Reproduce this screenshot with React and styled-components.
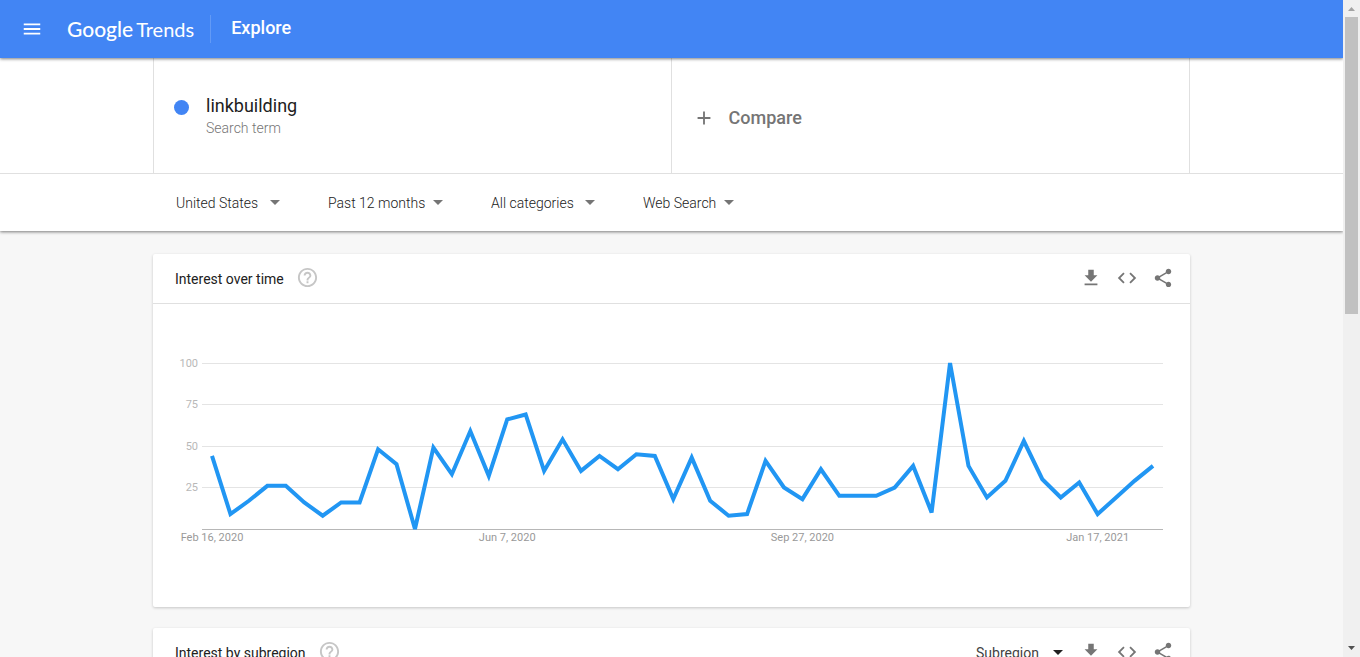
import React from "react";
import styled, { createGlobalStyle } from "styled-components";
import {
  MdAdd,
  MdCode,
  MdHelpOutline,
  MdMenu,
  MdShare,
} from "react-icons/md";

const values = [
  44, 9, 17, 26, 26, 16, 8, 16, 16, 48, 39, 0, 49, 33, 59, 32, 66, 69, 35, 54,
  35, 44, 36, 45, 44, 18, 43, 17, 8, 9, 41, 25, 18, 36, 20, 20, 20, 25, 38, 10,
  100, 38, 19, 29, 53, 30, 19, 28, 9, 19, 29, 38,
];

const dateLabels = [
  { week: 0, text: "Feb 16, 2020" },
  { week: 16, text: "Jun 7, 2020" },
  { week: 32, text: "Sep 27, 2020" },
  { week: 48, text: "Jan 17, 2021" },
];

const filters = [
  { label: "Location", value: "United States", wide: true },
  { label: "Time range", value: "Past 12 months" },
  { label: "Category", value: "All categories", wide: true },
  { label: "Search type", value: "Web Search" },
];

const PLOT = { left: 49, right: 1010, top: 59, bottom: 225 };

const weekX = (week) => 59 + (week * 941) / (values.length - 1);
const valueY = (value) =>
  PLOT.bottom - (value * (PLOT.bottom - PLOT.top)) / 100;

function DownloadIcon() {
  return (
    <svg viewBox="0 0 24 24" fill="currentColor" aria-hidden="true">
      <path d="M19 9h-4V3H9v6H5l7 7 7-7zM5 18v2h14v-2H5z" />
    </svg>
  );
}

function InterestChart() {
  const points = values.map((v, i) => `${weekX(i)},${valueY(v)}`).join(" ");

  return (
    <Chart viewBox="0 0 1037 303" role="img" aria-label="Interest over time">
      {[100, 75, 50, 25].map((tick) => (
        <g key={tick}>
          <rect
            x={PLOT.left}
            y={Math.floor(valueY(tick))}
            width={PLOT.right - PLOT.left}
            height="1"
            fill="#e4e4e4"
          />
          <text x="45" y={Math.floor(valueY(tick)) + 4} textAnchor="end" fill="#b8b8b8">
            {tick}
          </text>
        </g>
      ))}
      <rect
        x={PLOT.left}
        y={PLOT.bottom}
        width={PLOT.right - PLOT.left}
        height="1"
        fill="#b7b7b7"
      />
      <polyline points={points} fill="none" stroke="#2196f3" strokeWidth="4" />
      {dateLabels.map((label) => (
        <text key={label.week} x={weekX(label.week)} y="237" textAnchor="middle" fill="#999">
          {label.text}
        </text>
      ))}
    </Chart>
  );
}

function CardActions() {
  return (
    <Actions>
      <IconButton aria-label="Download CSV">
        <DownloadIcon />
      </IconButton>
      <IconButton aria-label="Embed">
        <MdCode />
      </IconButton>
      <IconButton aria-label="Share">
        <MdShare />
      </IconButton>
    </Actions>
  );
}

function App() {
  return (
    <>
      <GlobalStyle />
      <Window>
        <Page>
          <Header>
            <MenuButton aria-label="Main menu">
              <MdMenu />
            </MenuButton>
            <Logo href="#">
              <b>Google</b>
              <span>Trends</span>
            </Logo>
            <PageName>Explore</PageName>
          </Header>

          <SearchArea>
            <Terms>
              <Term>
                <Dot />
                <TermText>
                  <TermName>linkbuilding</TermName>
                  <TermType>Search term</TermType>
                </TermText>
              </Term>
              <Compare>
                <MdAdd />
                Compare
              </Compare>
            </Terms>
            <FilterBar>
              <Filters>
                {filters.map((filter) => (
                  <Filter key={filter.label} $wide={filter.wide}>
                    <Select $light aria-label={filter.label}>
                      <option>{filter.value}</option>
                    </Select>
                    <Caret />
                  </Filter>
                ))}
              </Filters>
            </FilterBar>
          </SearchArea>

          <Cards>
            <Card>
              <CardHeader>
                <CardTitle>Interest over time</CardTitle>
                <HelpButton aria-label="Help with interest over time">
                  <MdHelpOutline />
                </HelpButton>
                <CardActions />
              </CardHeader>
              <InterestChart />
            </Card>
            <Card>
              <CardHeader>
                <CardTitle>Interest by subregion</CardTitle>
                <HelpButton aria-label="Help with interest by subregion">
                  <MdHelpOutline />
                </HelpButton>
                <Resolution>
                  <Select aria-label="Resolution">
                    <option>Subregion</option>
                  </Select>
                  <Caret $dark />
                </Resolution>
                <CardActions />
              </CardHeader>
            </Card>
          </Cards>
        </Page>

        <Scrollbar aria-hidden="true">
          <ScrollArrow $up />
          <Thumb />
          <ScrollArrow />
        </Scrollbar>
      </Window>
    </>
  );
}

export default App;

const GlobalStyle = createGlobalStyle`
  * {
    box-sizing: border-box;
  }
  body {
    margin: 0;
    font-family: Roboto, "Liberation Sans", sans-serif;
    color: #212121;
    background: #f7f7f7;
  }
  button, select {
    margin: 0;
    padding: 0;
    border: 0;
    background: none;
    font: inherit;
    color: inherit;
    cursor: pointer;
  }
`;

const Window = styled.div`
  display: flex;
  height: 100vh;
`;

const Page = styled.div`
  flex: 1;
  min-width: 0;
  overflow: hidden;
`;

const Header = styled.header`
  position: relative;
  z-index: 1;
  display: flex;
  align-items: center;
  height: 58px;
  padding-left: 21px;
  color: #fff;
  background: #4285f4;
  box-shadow: 0 1px 3px rgba(0, 0, 0, 0.5);
`;

const MenuButton = styled.button`
  display: flex;
  font-size: 22px;
`;

const Logo = styled.a`
  display: flex;
  align-items: baseline;
  gap: 3px;
  margin-left: 24px;
  font-family: Lato, sans-serif;
  font-size: 20px;
  line-height: 28px;
  color: #fff;
  text-decoration: none;

  b {
    font-size: 21px;
    font-weight: 500;
  }
  span {
    font-weight: 400;
  }
`;

const PageName = styled.h1`
  margin: 0 0 0 16px;
  padding: 0 0 2px 20px;
  border-left: 1px solid #629af6;
  font-size: 18px;
  font-weight: 500;
  line-height: 26px;
`;

const SearchArea = styled.section`
  position: relative;
  background: #fff;
  box-shadow: 0 1px 3px rgba(0, 0, 0, 0.5);
`;

const Terms = styled.div`
  display: grid;
  grid-template-columns: 1fr 1fr;
  max-width: 1037px;
  height: 115px;
  margin: 0 auto;
  border: solid #e0e0e0;
  border-width: 0 1px;
`;

const Term = styled.button`
  display: flex;
  align-items: flex-start;
  padding: 36px 20px 0;
  text-align: left;

  &:not(:last-child) {
    border-right: 1px solid #e0e0e0;
  }
`;

const Dot = styled.span`
  width: 15px;
  height: 15px;
  margin: 6px 17px 0 0;
  border-radius: 50%;
  background: #4285f4;
`;

const TermText = styled.span`
  display: flex;
  flex-direction: column;
`;

const TermName = styled.span`
  font-size: 18px;
  line-height: 24px;
`;

const TermType = styled.span`
  font-size: 14px;
  font-weight: 300;
  line-height: 20px;
  color: #757575;
`;

const Compare = styled.button`
  display: flex;
  align-items: center;
  gap: 14px;
  padding: 4px 21px 0;
  font-size: 18px;
  font-weight: 500;
  color: #757575;

  svg {
    font-size: 22px;
  }
`;

const FilterBar = styled.div`
  border-top: 1px solid #e0e0e0;
`;

const Filters = styled.div`
  display: flex;
  align-items: center;
  gap: 48px;
  max-width: 1037px;
  height: 57px;
  margin: 0 auto;
  padding-left: 23px;
`;

const Filter = styled.span`
  display: flex;
  align-items: center;
  gap: ${(props) => (props.$wide ? "11px" : "7px")};
  color: #212121;
`;

const Select = styled.select`
  appearance: none;
  font-size: 14px;
  font-weight: ${(props) => (props.$light ? 300 : 400)};
  line-height: 20px;
`;

const Caret = styled.span`
  border: 5px solid transparent;
  border-top-color: ${(props) => (props.$dark ? "#212121" : "#757575")};
  border-bottom: 0;
`;

const Cards = styled.main`
  display: flex;
  flex-direction: column;
  gap: 21px;
  max-width: 1037px;
  margin: 0 auto;
  padding: 23px 0;
`;

const Card = styled.section`
  border-radius: 2px;
  background: #fff;
  box-shadow: 0 1px 3px rgba(0, 0, 0, 0.2);
`;

const CardHeader = styled.div`
  display: flex;
  align-items: center;
  height: 50px;
  padding: 0 16px 0 22px;
  border-bottom: 1px solid #e0e0e0;
`;

const CardTitle = styled.h2`
  margin: 0;
  font-size: 14px;
  font-weight: 400;
  line-height: 20px;
`;

const HelpButton = styled.button`
  display: flex;
  margin: 0 auto 3px 12px;
  font-size: 23px;
  color: #c6c6c6;
`;

const Resolution = styled.span`
  display: flex;
  align-items: center;
  gap: 14px;
  margin-right: 17px;
  color: #424242;
`;

const Actions = styled.div`
  display: flex;
  gap: 14px;
  padding-bottom: 2px;
`;

const IconButton = styled.button`
  display: flex;
  color: #757575;

  svg {
    width: 22px;
    height: 22px;
  }
`;

const Chart = styled.svg`
  display: block;
  width: 100%;
  height: auto;
  font-size: 11px;
`;

const Scrollbar = styled.div`
  display: flex;
  flex-direction: column;
  align-items: center;
  width: 17px;
  background: #f0f0f0;
`;

const ScrollArrow = styled.span`
  width: 7px;
  height: 4px;
  margin: ${(props) => (props.$up ? "7px 0 6px" : "auto 0 7px")};
  background: ${(props) => (props.$up ? "#a3a3a3" : "#505050")};
  clip-path: ${(props) =>
    props.$up
      ? "polygon(50% 0, 100% 100%, 0 100%)"
      : "polygon(0 0, 100% 0, 50% 100%)"};
`;

const Thumb = styled.span`
  width: 13px;
  height: 297px;
  background: #c1c1c1;
`;
